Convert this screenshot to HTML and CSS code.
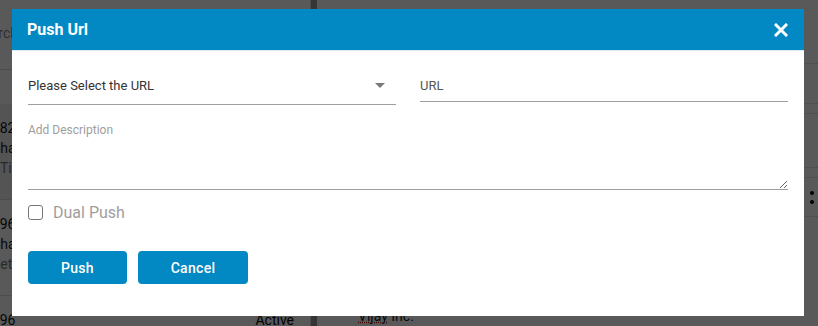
FILE: index.html
```html
<!DOCTYPE html>
<html lang="en">
<head>
  <meta charset="UTF-8" />
  <meta name="viewport" content="width=device-width, initial-scale=1.0"/>
  <title>Push Url</title>
  <link rel="stylesheet" href="styles.css">
</head>
<body>

<!-- page behind the modal -->
<div class="app">
  <aside class="sidebar">
    <div class="search">Search</div>
    <div class="filter"></div>
    <div class="item selected">
      <div class="item-id">1282</div>
      <div class="item-name">Shaan</div>
      <div class="item-sub">Ticket</div>
    </div>
    <div class="item">
      <div class="item-id">1296</div>
      <div class="item-name">Shaan</div>
      <div class="item-sub shifted">Set up</div>
    </div>
    <div class="item">
      <div class="item-id">1296 <span class="status">Active</span></div>
    </div>
  </aside>
  <div class="divider"></div>
  <main class="main">
    <div class="toolbar"></div>
    <div class="tabs"></div>
    <div class="gap-row"></div>
    <div class="row"></div>
    <div class="gap-row"></div>
    <div class="row with-menu"><span class="kebab"></span></div>
    <div class="company"><span class="spell">Vijay</span> Inc.</div>
  </main>
</div>

<div class="overlay"></div>

<div class="modal">
  <div class="modal-header">
    <h2>Push Url</h2>
    <button class="close" type="button" aria-label="Close">
      <svg width="14" height="14" viewBox="0 0 14 14">
        <path d="M2 2 L12 12 M12 2 L2 12" stroke="#fff" stroke-width="3" stroke-linecap="square"/>
      </svg>
    </button>
  </div>
  <form class="modal-body">
    <div class="field-row">
      <div class="select-field">
        <span>Please Select the URL</span>
        <span class="arrow"></span>
      </div>
      <input class="url-field" type="text" placeholder="URL" />
    </div>
    <textarea class="desc" placeholder="Add Description"></textarea>
    <label class="check">
      <input type="checkbox" /> <span>Dual Push</span>
    </label>
    <div class="actions">
      <button type="button" class="btn push">Push</button>
      <button type="button" class="btn cancel">Cancel</button>
    </div>
  </form>
</div>

</body>
</html>
```

FILE: styles.css
```css
body {
  margin: 0;
  font-family: Roboto, "Liberation Sans", sans-serif;
  background-color: #fff;
  color: #333;
  overflow: hidden;
  height: 326px;
}

/* background page */
.app {
  display: grid;
  grid-template-columns: 340px 6px 1fr;
  margin-left: -29px;
  height: 326px;
  overflow: hidden;
}
.sidebar {
  border-right: 1px solid #ddd;
}
.search {
  height: 70px;
  line-height: 66px;
  font-size: 14px;
  color: #888;
  border-bottom: 1px solid #ddd;
  box-sizing: border-box;
  text-indent: 4px;
}
.filter {
  height: 34px;
}
.item {
  height: 96px;
  padding: 14px 0 0 13px;
  box-sizing: border-box;
  border-bottom: 1px solid #ddd;
  font-size: 14px;
  line-height: 20px;
}
.item.selected {
  background-color: #f0f0f0;
}
.item-id {
  color: #111;
  display: flex;
  justify-content: space-between;
}
.item-name {
  color: #222;
  padding-left: 8px;
}
.item-sub {
  color: #777;
  padding-left: 16px;
}
.item-sub.shifted {
  padding-left: 8px;
}
.status {
  margin-right: 16px;
  color: #000;
}
.divider {
  background-color: #999;
}
.main {
  background-color: #fff;
}
.toolbar {
  height: 63px;
  border-bottom: 1px solid #e2e2e2;
}
.tabs {
  height: 39px;
  border-bottom: 1px solid #e2e2e2;
}
.gap-row {
  height: 9px;
  border-bottom: 1px solid #e2e2e2;
}
.row {
  height: 53px;
  border-bottom: 1px solid #e2e2e2;
}
.row.with-menu {
  height: 38px;
  position: relative;
}
.kebab {
  position: absolute;
  right: 4px;
  top: 13px;
  width: 4px;
  height: 4px;
  border-radius: 50%;
  background-color: #000;
  box-shadow: 0 9px 0 #000;
}
.company {
  margin: 92px 0 0 41px;
  font-size: 14px;
  line-height: 14px;
  color: #222;
}
.spell {
  text-decoration: underline dotted #c00;
}

/* modal */
.overlay {
  position: fixed;
  inset: 0;
  background-color: rgba(0, 0, 0, 0.65);
}
.modal {
  position: fixed;
  top: 9px;
  left: 12px;
  width: 792px;
  background-color: #fff;
}
.modal-header {
  height: 41px;
  background-color: #0288c2;
  border-bottom: 1px solid #d6ebf4;
  display: flex;
  align-items: center;
  justify-content: space-between;
  padding: 0 16px 0 15px;
}
.modal-header h2 {
  margin: 0;
  color: #fff;
  font-size: 16px;
  font-weight: 700;
}
.close {
  background: none;
  border: none;
  padding: 0;
  width: 14px;
  height: 14px;
  display: flex;
  cursor: pointer;
}
.modal-body {
  padding: 15px 16px 32px;
  display: flex;
  flex-direction: column;
}
.field-row {
  display: grid;
  grid-template-columns: 1fr 1fr;
  gap: 24px;
  align-items: start;
}
.select-field {
  height: 38px;
  border-bottom: 1px solid #9e9e9e;
  display: flex;
  align-items: center;
  justify-content: space-between;
  font-size: 13px;
  color: #333;
  padding-right: 11px;
}
.arrow {
  width: 0;
  height: 0;
  border-left: 5px solid transparent;
  border-right: 5px solid transparent;
  border-top: 5px solid #7a7a7a;
}
.url-field {
  margin-top: 3px;
  height: 32px;
  box-sizing: content-box;
  padding: 0;
  border: none;
  border-bottom: 1px solid #9e9e9e;
  font-family: inherit;
  font-size: 13px;
  outline: none;
}
.url-field::placeholder {
  color: #555;
}
.desc {
  margin-top: 14px;
  height: 67px;
  padding: 3px 0 0;
  border: none;
  border-bottom: 1px solid #9e9e9e;
  font-family: inherit;
  font-size: 12px;
  line-height: 16px;
  outline: none;
}
.desc::placeholder {
  color: #9e9e9e;
}
.check {
  margin-top: 10px;
  height: 24px;
  display: flex;
  align-items: center;
  gap: 10px;
  font-size: 16px;
  color: #9e9e9e;
}
.check input {
  appearance: none;
  margin: 0;
  width: 15px;
  height: 15px;
  border: 1px solid #767676;
  border-radius: 3px;
}
.actions {
  margin-top: 27px;
  display: flex;
  gap: 11px;
}
.btn {
  height: 33px;
  background-color: #0288c2;
  color: #fff;
  border: none;
  border-radius: 4px;
  font-family: inherit;
  font-size: 14px;
  font-weight: 500;
  letter-spacing: 0.3px;
  cursor: pointer;
}
.push {
  width: 99px;
}
.cancel {
  width: 110px;
}
```
